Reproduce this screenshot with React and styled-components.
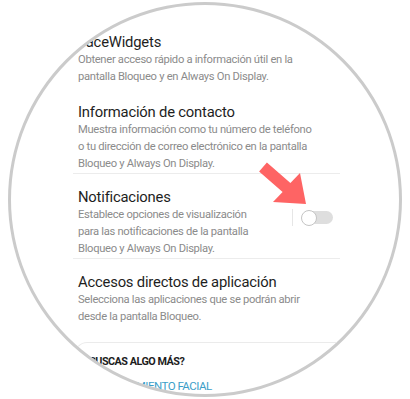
import React from 'react'
import styled, { createGlobalStyle } from 'styled-components';

const GlobalStyle = createGlobalStyle`
    html, body {
        margin: 0;
        padding: 0;
        background: #ffffff;
    }
    body {
        font-family: Roboto, "Liberation Sans", sans-serif;
    }
`;

const Page = styled.div`
    position: relative;
    width: 410px;
    height: 399px;
    box-sizing: border-box;
    padding: 2px 0 0 8px;
    overflow: hidden;
    background: #fff;
`;

const Lens = styled.div`
    width: 394px;
    height: 395px;
    box-sizing: border-box;
    border: 3px solid #cbcbcb;
    border-radius: 50%;
    overflow: hidden;
    background: #fff;
`;

const Screen = styled.div`
    display: flex;
    flex-direction: column;
    padding: 14px 0 0 62px;
`;

const Group = styled.div`
    width: 267px;
    display: flex;
    flex-direction: column;
`;

const Row = styled.div`
    display: flex;
    align-items: flex-start;
    padding: 14px 7px ${p => p.$gap ? '4px' : '1px'} 5px;
`;

const Texts = styled.div`
    flex: 1;
    display: flex;
    flex-direction: column;
`;

const Title = styled.div`
    font-size: 14.8px;
    letter-spacing: -0.2px;
    line-height: 18px;
    color: #1e1e1e;
    white-space: nowrap;
`;

const Desc = styled.div`
    font-size: 11.2px;
    letter-spacing: -0.3px;
    line-height: 17px;
    color: #8b8b8b;
    white-space: nowrap;
`;

const Divider = styled.div`
    height: 1px;
    background: #ececec;
`;

const Controls = styled.div`
    display: flex;
    align-items: center;
    margin-top: 21px;
`;

const Sep = styled.div`
    width: 1px;
    height: 17px;
    background: #e6e6e6;
    margin-right: 11px;
`;

const Track = styled.div`
    width: 29px;
    height: 13px;
    border-radius: 7px;
    background: #dedede;
    display: flex;
    align-items: center;
`;

const Knob = styled.div`
    width: 14px;
    height: 14px;
    margin-left: -3px;
    border-radius: 50%;
    background: #fff;
    border: 1px solid #c4c4c4;
    flex-shrink: 0;
`;

const Card = styled.div`
    margin: 16px 0 0 2px;
    width: 263px;
    border: 1px solid #ebebeb;
    border-bottom: none;
    border-radius: 12px 12px 0 0;
    padding: 11px 0 0 8px;
    display: flex;
    flex-direction: column;
    gap: 8px;
`;

const CardHead = styled.div`
    font-family: Roboto, sans-serif;
    font-weight: bold;
    font-size: 10.8px;
    letter-spacing: -0.5px;
    line-height: 16px;
    color: #1d1d1d;
    white-space: nowrap;
`;

const CardLink = styled.div`
    font-family: Roboto, sans-serif;
    font-size: 11.5px;
    letter-spacing: -0.5px;
    line-height: 16px;
    color: #3c9ec8;
    white-space: nowrap;
`;

const Arrow = styled.svg`
    position: absolute;
    left: 0;
    top: 0;
    pointer-events: none;
`;

const items = [
    {
        title: 'FaceWidgets',
        lines: ['Obtener acceso rápido a información útil en la', 'pantalla Bloqueo y en Always On Display.'],
        gap: true
    },
    {
        title: 'Información de contacto',
        lines: ['Muestra información como tu número de teléfono', 'o tu dirección de correo electrónico en la pantalla', 'Bloqueo y Always On Display.'],
        divider: true
    },
    {
        title: 'Notificaciones',
        lines: ['Establece opciones de visualización', 'para las notificaciones de la pantalla', 'Bloqueo y Always On Display.'],
        toggle: true,
        divider: true
    },
    {
        title: 'Accesos directos de aplicación',
        lines: ['Selecciona las aplicaciones que se podrán abrir', 'desde la pantalla Bloqueo.']
    }
]

export default function App() {
    return (
        <Page>
            <GlobalStyle />
            <Lens>
                <Screen>
                    <Group>
                        {items.map(item => (
                            <React.Fragment key={item.title}>
                                <Row $gap={item.gap}>
                                    <Texts>
                                        <Title>{item.title}</Title>
                                        {item.lines.map(l => <Desc key={l}>{l}</Desc>)}
                                    </Texts>
                                    {item.toggle ? (
                                        <Controls>
                                            <Sep />
                                            <Track><Knob /></Track>
                                        </Controls>
                                    ) : null}
                                </Row>
                                {item.divider ? <Divider /> : null}
                            </React.Fragment>
                        ))}
                    </Group>
                    <Card>
                        <CardHead>¿BUSCAS ALGO MÁS?</CardHead>
                        <CardLink>RECONOCIMIENTO FACIAL</CardLink>
                    </Card>
                </Screen>
            </Lens>
            {/* red pointer over the switch */}
            <Arrow width="410" height="399" viewBox="0 0 410 399">
                <polygon
                    points="266.9,162.5 290.4,183 300,173 306,204 273,202 282.6,192 259.1,171.5"
                    fill="#fe6464"
                />
            </Arrow>
        </Page>
    )
}
